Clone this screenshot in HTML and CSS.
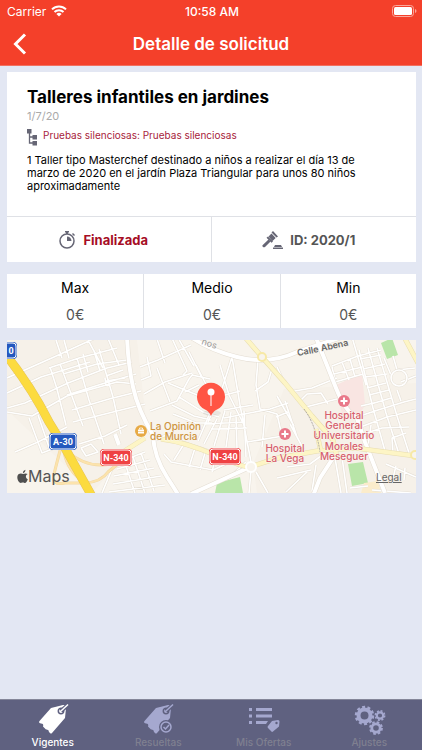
FILE: index.html
```html
<!DOCTYPE html>
<html lang="es">
<head>
  <meta charset="UTF-8">
  <meta name="viewport" content="width=device-width, initial-scale=1.0">
  <title>Detalle de solicitud</title>
  <link rel="stylesheet" href="styles.css">
</head>
<body>
  <header class="header">
    <div class="status-bar">
      <span class="carrier">Carrier
        <svg width="16" height="12" viewBox="0 0 16 12" fill="none" stroke="#fff" stroke-width="2">
          <path d="M1 4.400a10 10 0 0 1 14 0M3.500 7a6.400 6.400 0 0 1 9 0"/>
          <path d="M8 11.600 5.400 9a3.700 3.700 0 0 1 5.200 0z" fill="#fff" stroke="none"/>
        </svg>
      </span>
      <span class="clock">10:58 AM</span>
      <svg class="battery" width="25" height="12" viewBox="0 0 25 12">
        <rect x="0.5" y="0.5" width="21" height="11" rx="3" fill="none" stroke="#fba79b"/>
        <rect x="2" y="2" width="18" height="8" rx="1.5" fill="#fff"/>
        <path d="M23 4v4q1.500-.6 1.500-2T23 4z" fill="#fba79b"/>
      </svg>
    </div>
    <div class="nav-bar">
      <button class="back" type="button" aria-label="Atrás">
        <svg width="14" height="22" viewBox="0 0 14 22" fill="none" stroke="#fff" stroke-width="3"><path d="M12 1.500 2.500 11l9.500 9.500"/></svg>
      </button>
      <h1>Detalle de solicitud</h1>
    </div>
  </header>

  <main class="content">
    <!-- Request card -->
    <section class="card">
      <div class="card-body">
        <h2>Talleres infantiles en jardines</h2>
        <div class="date">1/7/20</div>
        <div class="category">
          <svg width="11" height="17" viewBox="0 0 11 17">
            <path d="M2.500 4v10H6M2.500 8H6" fill="none" stroke="#666675" stroke-width="1.300"/>
            <path d="M0 0h4.500v4.500H0zM5.500 6H10v4.500H5.500zM5.500 12H10v4.500H5.500z" fill="#666675"/>
          </svg>
          <span>Pruebas silenciosas: Pruebas silenciosas</span>
        </div>
        <p>1 Taller tipo Masterchef destinado a niños a realizar el día 13 de marzo de 2020 en el jardín Plaza Triangular para unos 80 niños aproximadamente</p>
      </div>
      <div class="card-footer">
        <div class="state">
          <svg width="17" height="18" viewBox="0 0 17 18">
            <circle cx="8" cy="10" r="7" fill="none" stroke="#666675" stroke-width="1.500"/>
            <path d="M6 0h4v1.500H9V3H7V1.500H6zM13 3l1-1 2 2-1 1zM8 5.500a4.500 4.500 0 0 1 4.500 4.500H8z" fill="#666675"/>
          </svg>
          <span>Finalizada</span>
        </div>
        <div class="request-id">
          <svg width="21" height="18" viewBox="0 0 21 18" fill="#666675">
            <path d="M11 0 16 5.500 14.500 6.500 9.500 1.500zM9.500 2.500l4.200 4.500-3.200 3L6.500 5.500zM6 5.500l5 5-1.500 1.200-5-5z"/>
            <path d="M6.500 8.500 8.500 10.500 3 16q-1.200.8-2.200-.2T.8 14zM13 14h6l1 2h-8zM11 16.500h10V18H11z"/>
          </svg>
          <span>ID: 2020/1</span>
        </div>
      </div>
    </section>

    <!-- Offer prices -->
    <dl class="prices">
      <div><dt>Max</dt><dd>0€</dd></div>
      <div><dt>Medio</dt><dd>0€</dd></div>
      <div><dt>Min</dt><dd>0€</dd></div>
    </dl>

    <!-- Map -->
    <section class="map">
      <svg viewBox="0 0 409 153" role="group" aria-label="Mapa">
        <defs>
          <path id="streets" d="M0 38 47 17 95-5M0 53 34 37 83 22M0 68 18 63 61 43 100 28 125 22M0 72 25 76 60 56 110 42 129 44M22 78 35 113 53 106M31 75 43 110M8 112 31 102 60 87M43 27 50 49 59 85M53 24 76 86M70 18 82 60 97 104M92 9 106 57 114 94M49 0 55 18M57 0 62 18M80-2 96 28M100-4 112 25M42 28 72 18 110 8M56 34 90 24 120 20M60 55 98 43 129 34M65 70 102 59 134 51M66 82 110 71 138 64M72 104 98 96 120 85M76 14 81 32M87 11 93 31M99 36 116 30M99 41 118 38M99 46 98 38M74 108 79 116 91 112 84 104 74 108M115 121 138 112M110 129 143 120M107 136 147 128M106 144 154 136M102 152 158 145M117 120 128 153M126 117 138 153M134 113 147 151M95 153 105 129 118 120"/>
          <path id="streets2" d="M133 27 151 20 184 5M134 40 144 36 140 17M137 54 158 42 185 33M149-4 158 23M164-4 180 31 176 35M170-4 187 26M182 12 195 38M189 25 204 54M150 28 163 62M143 71 170 61 182 39 186 34M161 43 195 57M172 57 196 72 212 77M165 65 187 76 204 80M166 74 189 83 205 83M185 35 203 39M192 45 178 52M213 25 222 55 239 89M225 17 213 55 201 82M225 17 233 65 245 127M207 58 233 51M217 70 246 65M217 78 263 69 281 63M198 84 238 82M204 89 240 88M191 101 205 68M197 104 210 79M207 106 218 71M219 107 224 72M230 108 229 75M239 117 237 71M149 100 161 94 173 101 218 116 239 126M157 114 164 122 206 130 219 124M177 104 167 120M188 108 182 127M198 113 193 130M209 115 205 132M251 20 249 45 253 69 270 74 275 96M265 29 261 42 248 51M258 75 255 107M240 102 276 96M239 122 222 138 211 141M244 131 242 153M249 132 261 153"/>
          <path id="streets3" d="M270 27 276 40M282 52 305 48 330 38M291 63 300 54 314 53 321 64M295 68 330 59M283 84 297 110M270 56 287 86M278 61 290 97M269 77 281 72M325 26 351 16 374 10M327 34 355 27M328 42 356 34M325 27 329 44M335 22 342 40M343 19 348 37M352 10 366 68 378 111M361 8 379 73 392 114M370 8 390 76 402 113M353 19 374 15M356 29 378 24M358 37 380 34M360 48 379 43M362 55 382 50M364 64 384 58M354 66 371 62M350 77 371 70 397 62 409 59M351 88 380 77 409 70M350 96 375 88 402 87M394 42 409 36M390 50 394 61M345-3 359 45M377 18 384 35M386 16 390 30 408 28M386 114 385 98 399 93M360 113 364 85M280 127 303 124 318 113M270 138 304 130M279 152 300 132M305 151 309 125M328 118 334 153M335 117 340 153M343 148 361 146M379 124 409 137M365 150 404 153M389 126 386 138M398 128 397 140"/>
          <g id="roads">
            <path d="M120-4Q121 24 126 47T146 95Q147 117 160 137T172 157"/>
            <path d="M174-10Q198 9 230 17T290 12L341-5"/>
            <path d="M308-5Q320 25 329 48T350 78L358 102 378 153M328 115 313 138 306 156M243 127 184 154M108 94 112 105"/>
          </g>
          <path id="avenues" d="M108 117 138 98M154 99Q178 102 208 115T243 127L271 118 310 111 348 108 409 116M236-5 255 17 278 43 305 76 326 100 330 117M309 89 314 112M396-5 411 23"/>
          <path id="ramps" d="M54 107Q50 122 47 134T58 143L78 143Q94 142 101 132L112 123M60 111Q80 129 104 124M57 112Q61 132 77 142"/>
        </defs>

        <path class="land" d="M0 0h409v153H0z"/>
        <path class="built" d="M0 0h130l10 90-54 62L0 70zM277 49 409 43V153H250l-4-29z"/>
        <path class="park" d="M210 143 233 137 236 153H208zM374 3 385-2 391 15 380 19zM341 124 356 122 361 143 345 146z"/>
        <path class="clinic" d="M327 46 355 33 358 65 350 79 336 76z"/>
        <path class="school" d="M357 143 371 141 374 153H354z"/>

        <g class="street casing"><use href="#streets"/><use href="#streets2"/><use href="#streets3"/></g>
        <g class="street"><use href="#streets"/><use href="#streets2"/><use href="#streets3"/></g>
        <use href="#roads" class="road casing"/>
        <use href="#roads" class="road"/>
        <use href="#ramps" class="ramp casing"/>
        <use href="#ramps" class="ramp"/>
        <use href="#avenues" class="avenue casing"/>
        <use href="#avenues" class="avenue"/>
        <circle class="street casing" cx="392" cy="38" r="8"/>
        <circle class="street" cx="392" cy="38" r="8"/>
        <circle class="roundabout" cx="244" cy="127" r="5"/>
        <circle class="roundabout yellow" cx="255" cy="17" r="4"/>
        <circle class="roundabout yellow" cx="408" cy="115" r="4"/>
        <path class="tracks" d="M297 69Q309 85 313 112"/>
        <path class="highway casing" d="M-8 6C18 38 32 62 42 82L58 108 87 160"/>
        <path class="highway" d="M-8 6C18 38 32 62 42 82L58 108 87 160"/>

        <!-- Road shields -->
        <g class="shield blue"><rect class="plate" x="-17" y="2" width="27" height="17" rx="4"/><rect x="-16" y="3" width="25" height="15" rx="3"/><text x="4" y="14">0</text></g>
        <g class="shield blue"><rect class="plate" x="42" y="93" width="28" height="17" rx="4"/><rect x="43" y="94" width="26" height="15" rx="3"/><text x="56" y="105">A-30</text></g>
        <g class="shield red"><rect class="plate" x="93" y="109" width="32" height="17" rx="4"/><rect x="94" y="110" width="30" height="15" rx="3"/><text x="109" y="121">N-340</text></g>
        <g class="shield red"><rect class="plate" x="202" y="108" width="32" height="17" rx="4"/><rect x="203" y="109" width="30" height="15" rx="3"/><text x="218" y="120">N-340</text></g>

        <!-- Places -->
        <path id="calle" fill="none" d="M291 16Q318 11 352 3"/>
        <path id="canos" fill="none" d="M194 4 218 12"/>
        <text class="street-name"><textPath href="#calle">Calle Abena</textPath></text>
        <text class="street-name light"><textPath href="#canos">ños</textPath></text>
        <circle cx="134" cy="91" r="6" fill="#e7aa45"/>
        <path d="M131 89.500h6v4h-6z" fill="#fff"/>
        <path d="M132.500 89.500v-1.500h3v1.500" fill="none" stroke="#fff" stroke-width=".8"/>
        <path d="M131 91.500h6" stroke="#e7aa45" stroke-width=".5"/>
        <text class="place gold"><tspan x="143" y="90">La Opinión</tspan><tspan x="143" y="100">de Murcia</tspan></text>
        <g class="cross"><circle cx="278" cy="94" r="6"/><path d="M274.500 94h7M278 90.500v7"/></g>
        <text class="place rose"><tspan x="278" y="112">Hospital</tspan><tspan x="278" y="122">La Vega</tspan></text>
        <g class="cross"><circle cx="337" cy="61" r="6"/><path d="M333.500 61h7M337 57.500v7"/></g>
        <text class="place rose"><tspan x="337" y="79">Hospital</tspan><tspan x="337" y="89">General</tspan><tspan x="337" y="99">Universitario</tspan><tspan x="337" y="110">Morales</tspan><tspan x="337" y="120">Meseguer</tspan></text>

        <!-- Pin -->
        <ellipse cx="205" cy="73" rx="9" ry="3" fill="#000" opacity=".06"/>
        <path d="M204 76Q202 71 198 69.500a14 14 0 1 1 12 0Q206 71 204 76z" fill="#ff5544"/>
        <path d="M204 54v12" stroke="#ffc9c3" stroke-width="1.500"/>
        <circle cx="204" cy="52" r="3.500" fill="#fff"/>

        <g transform="translate(10 131)" fill="#4f4f4f">
          <path d="M6 3C4 1.800.3 2.500.3 6c0 3.500 2.200 6.500 4.200 5.800 1.300-.5 1.800-.4 3 .1 1.500.4 2.700-1.900 3.300-3.700-2.600-1.200-2.400-4.400-.1-5.200C9.300 2 7.500 2.400 6 3zM5.800 2.200Q5.800-.5 8.400-1.200 8.500 1.500 5.800 2.200z"/>
        </g>
        <text class="maps" x="21" y="142">Maps</text>
        <a href="#legal"><text class="legal" x="369" y="141">Legal</text></a>
      </svg>
    </section>
  </main>

  <nav class="tab-bar">
    <a href="#vigentes" class="tab active">
      <svg width="34" height="32" viewBox="0 0 34 32">
        <path d="M15 5 27 2q3-.5 3 3l-1 10-13 15q-1 1-2 0l-1-1q0-3-3-2.500L7 23.500q1-3-2-3L3.500 20q-1-1 0-2z" fill="currentColor"/>
        <circle cx="25" cy="8" r="2.700" class="hole"/><path d="m25 8 8-7" class="string-gap"/><path d="m25 8 7-6.500" class="string"/>
      </svg>
      <span>Vigentes</span>
    </a>
    <a href="#resueltas" class="tab">
      <svg width="34" height="32" viewBox="0 0 34 32">
        <path d="M15 5 27 2q3-.5 3 3l-1 10-13 15q-1 1-2 0l-1-1q0-3-3-2.500L7 23.500q1-3-2-3L3.500 20q-1-1 0-2z" fill="currentColor"/>
        <circle cx="25" cy="8" r="2.700" class="hole"/><path d="m25 8 8-7" class="string-gap"/><path d="m25 8 7-6.500" class="string"/>
        <circle cx="25" cy="24" r="7" class="badge"/><circle cx="25" cy="24" r="5" class="string"/><path d="m22.500 24 2 2 3.500-4" class="string"/>
      </svg>
      <span>Resueltas</span>
    </a>
    <a href="#ofertas" class="tab">
      <svg width="34" height="32" viewBox="0 0 34 32">
        <path d="M2 5h3v3H2zM9 5h16v3H9zM2 11.500h3v3H2zM9 11.500h16v3H9zM2 18h3v3H2zM9 18h12l-2 3H9z" fill="currentColor"/>
        <path d="m25 18 6-1q1.500 0 1.500 1.500l-.5 5-6 5q-1 1-2-.5l-3-3q-1-1 0-2z" fill="currentColor"/>
        <circle cx="29.500" cy="20" r="1.200" class="badge"/>
      </svg>
      <span>Mis Ofertas</span>
    </a>
    <a href="#ajustes" class="tab">
      <svg width="34" height="32" viewBox="0 0 34 32" fill="none" stroke="currentColor">
        <circle cx="12.500" cy="12.500" r="6" stroke-width="4"/><circle cx="12.500" cy="12.500" r="8.500" stroke-width="2.500" stroke-dasharray="3 2.340"/>
        <circle cx="28" cy="12.500" r="3.200" stroke-width="2.200"/><circle cx="28" cy="12.500" r="4.700" stroke-width="1.500" stroke-dasharray="2 1.690"/>
        <circle cx="24" cy="25" r="4.200" stroke-width="2.800"/><circle cx="24" cy="25" r="6" stroke-width="1.800" stroke-dasharray="2.600 2.110"/>
      </svg>
      <span>Ajustes</span>
    </a>
  </nav>
</body>
</html>
```
FILE: styles.css
```css
* {
  box-sizing: border-box;
}

body {
  margin: 0;
  min-height: 100vh;
  display: flex;
  flex-direction: column;
  background: #e3e7f3;
  color: #000;
  font-family: Inter, "Liberation Sans", sans-serif;
}

h1, h2, p, dl, dd {
  margin: 0;
}

svg {
  display: block;
  flex: none;
}

a {
  color: inherit;
  text-decoration: none;
}

.header {
  background: #f4402a;
  border-bottom: 1px solid #f2705f;
  color: #fff;
}

.status-bar {
  display: grid;
  grid-template-columns: 1fr auto 1fr;
  align-items: center;
  height: 22px;
  padding: 0 5px 0 7px;
  font-size: 12px;
}

.carrier {
  display: flex;
  align-items: center;
  gap: 5px;
}

.clock {
  font-weight: 500;
}

.battery {
  justify-self: end;
}

.nav-bar {
  display: grid;
  grid-template-columns: 40px 1fr 40px;
  align-items: center;
  height: 43px;
}

.back {
  display: flex;
  padding: 8px 13px;
  border: none;
  background: none;
}

h1 {
  font-size: 17px;
  font-weight: 600;
  text-align: center;
}

.content {
  flex: 1;
  display: flex;
  flex-direction: column;
  gap: 12px;
  padding: 6px 6px 12px 7px;
}

.card {
  background: #fff;
}

.card-body {
  padding: 13px 40px 23px 20px;
}

h2 {
  font-size: 17px;
  line-height: 24px;
  font-weight: 700;
}

.date {
  color: #aaa;
  font-size: 11px;
  line-height: 14px;
}

.category {
  display: flex;
  align-items: flex-start;
  gap: 5px;
  padding-top: 5px;
  color: #a71c3c;
  font-size: 10px;
  line-height: 14px;
}

.category svg {
  margin-top: 1px;
}

.card p {
  padding-top: 8px;
  font-size: 11px;
  line-height: 13px;
}

.card-footer {
  display: grid;
  grid-template-columns: 1fr 1fr;
  border-top: 1px solid #dfe1e6;
}

.card-footer div {
  display: flex;
  align-items: center;
  justify-content: center;
  gap: 7px;
  height: 45px;
  padding-right: 10px;
  color: #555;
  font-size: 13px;
  font-weight: 700;
}

.card-footer .state {
  border-right: 1px solid #dfe1e6;
  color: #a60d25;
}

.prices {
  display: grid;
  grid-template-columns: repeat(3, 1fr);
  background: #fff;
  text-align: center;
}

.prices div {
  padding: 4px 0 3px;
}

.prices div + div {
  border-left: 1px solid #dfe1e6;
}

.prices dt {
  font-size: 14px;
  line-height: 20px;
}

.prices dd {
  padding-top: 7px;
  color: #555;
  font-size: 14px;
  line-height: 20px;
}

/* Map */
.map svg {
  width: 100%;
  height: auto;
}

.land { fill: #f8f4ed; }
.built { fill: #f6f1e9; }
.park { fill: #b9e5a9; }
.clinic { fill: #f9e5e2; }
.school { fill: #fbeccb; }

.street, .road, .ramp, .avenue, .highway {
  fill: none;
  stroke: #fff;
  stroke-width: 1.6;
  stroke-linejoin: round;
}

.street.casing {
  stroke: #e6e0d6;
  stroke-width: 2.6;
}

.road { stroke-width: 4; }
.road.casing { stroke: #e4ddd2; stroke-width: 5; }
.ramp { stroke: #fce3ac; stroke-width: 2; }
.ramp.casing { stroke: #f1d7a1; stroke-width: 3; }
.avenue { stroke: #fdf5c5; stroke-width: 4; }
.avenue.casing { stroke: #e8ddb0; stroke-width: 5; }
.highway { stroke: #fcdb3f; stroke-width: 8; }
.highway.casing { stroke: #e5c35b; stroke-width: 9; }

.roundabout {
  fill: #f8f4ed;
  stroke: #fff;
  stroke-width: 2;
}

.roundabout.yellow {
  stroke: #f7e9a7;
}

.tracks {
  fill: none;
  stroke: #aaa5a0;
  stroke-width: 1;
  stroke-dasharray: 2 1;
}

.shield rect {
  stroke: #fff;
  stroke-width: 1;
}

.shield .plate {
  stroke: none;
}

.shield.blue rect { fill: #2458be; }
.shield.red rect { fill: #ef4143; }

.shield text {
  fill: #fff;
  font: bold 9px Roboto, "Liberation Sans", sans-serif;
  text-anchor: middle;
}

.street-name {
  fill: #666;
  font-size: 9px;
  font-weight: 600;
}

.street-name.light {
  fill: #999;
  font-weight: 400;
}

.place {
  font-size: 10px;
  font-weight: 500;
  paint-order: stroke;
  stroke: #faf5ef;
  stroke-width: 1px;
}

.place.gold { fill: #cd9440; }
.place.rose { fill: #d65f6d; text-anchor: middle; }
.cross circle { fill: #e9798a; }
.cross path { stroke: #fff; stroke-width: 2; }

.maps {
  fill: #555;
  font-size: 16px;
}

.legal {
  fill: #666;
  font-size: 10px;
  text-decoration: underline;
}

/* Bottom tabs */
.tab-bar {
  display: grid;
  grid-template-columns: repeat(4, 1fr);
  background: #5f6180;
  border-top: 1px solid #858799;
}

.tab {
  display: flex;
  flex-direction: column;
  align-items: center;
  gap: 1px;
  padding: 3px 0 1px;
  color: #a5a8cf;
  font-size: 10px;
  font-weight: 500;
  line-height: 13px;
}

.tab span {
  color: #7f8090;
}

.tab.active,
.tab.active span {
  color: #fff;
}

.hole, .string, .string-gap {
  fill: none;
  stroke: #5f6180;
  stroke-width: 1.5;
}

.string-gap {
  stroke-width: 4;
}

.string {
  stroke: currentColor;
}

.badge {
  fill: #5f6180;
}
```
